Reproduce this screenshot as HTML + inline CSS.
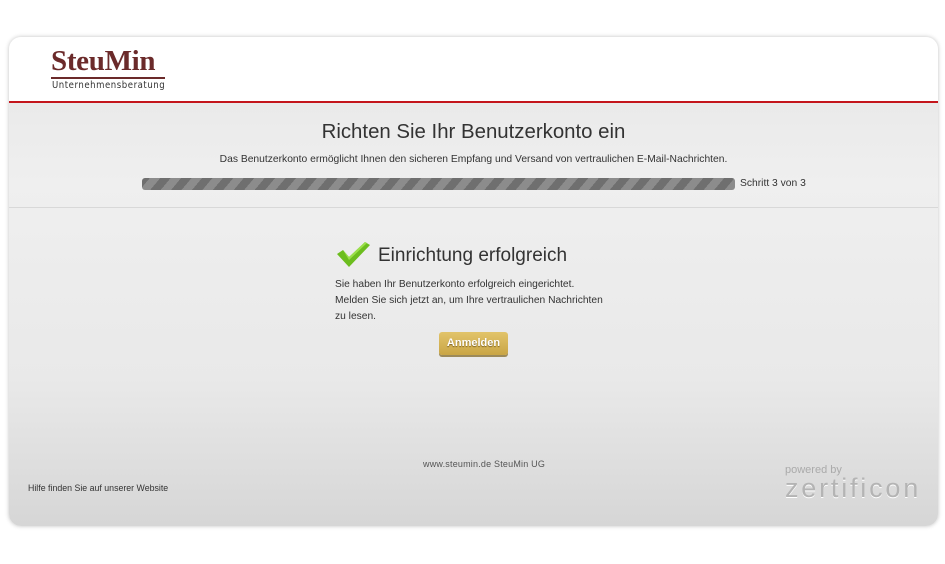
<!DOCTYPE html>
<html><head><style>
body{margin:0;width:945px;height:564px;background:#fff;font-family:"Liberation Sans",sans-serif;position:relative;overflow:hidden}
.card{position:absolute;left:9px;top:37px;width:929px;height:489px;border-radius:12px;overflow:hidden;box-shadow:0 0 4px rgba(0,0,0,.25);background:linear-gradient(#e6e6e6,#efefef 30%,#e9e9e9 70%,#d6d6d6)}
.hdr{position:absolute;left:0;top:0;width:100%;height:64px;background:#fff;border-bottom:2px solid #c4161c}
.logo{position:absolute;left:42px;top:9px;width:115px;font-family:"Liberation Serif",serif;font-weight:bold;font-size:29px;color:#6b2a2a;letter-spacing:-0.3px;line-height:30px}
.logo .bar{position:absolute;left:0;top:31px;width:114px;height:2px;background:#6b2a2a}
.logo .sub{position:absolute;left:1px;top:34px;font-family:"DejaVu Sans Condensed","Liberation Sans",sans-serif;font-weight:normal;font-size:9.5px;letter-spacing:.55px;line-height:11px;color:#333;white-space:nowrap}
.t{position:absolute;width:100%;text-align:center;color:#333}
.prog{position:absolute;left:133px;top:141px;width:593px;height:12px;border-radius:3px;background:repeating-linear-gradient(-50deg,#8c8c8c 0 8px,#6f6f6f 8px 16px)}
.line{position:absolute;left:0;top:170px;width:100%;height:1px;background:#d8d8d8}
.btn{position:absolute;left:430px;top:295px;width:69px;height:23px;border-radius:3px;background:linear-gradient(#e2c46a,#c9a545);box-shadow:0 2px 0 #9c8a5a;color:#fff;font-weight:bold;font-size:11px;text-align:center;line-height:23px;text-shadow:0 1px 1px #7a6020}
</style></head><body>
<div class="card">
<div class="hdr"><div class="logo">SteuMin<div class="bar"></div><div class="sub">Unternehmensberatung</div></div></div>
<div class="t" style="top:84px;font-size:20.4px">Richten Sie Ihr Benutzerkonto ein</div>
<div class="t" style="top:117px;font-size:10.3px">Das Benutzerkonto ermöglicht Ihnen den sicheren Empfang und Versand von vertraulichen E-Mail-Nachrichten.</div>
<div class="prog"></div>
<div style="position:absolute;left:731px;top:141px;font-size:10.3px;color:#333">Schritt 3 von 3</div>
<div class="line"></div>
<svg style="position:absolute;left:326px;top:203px" width="36" height="28" viewBox="0 0 36 28"><path d="M2 14 L8 10 L14 17 L30 2 L35 5 L14 27 Z" fill="#6cbd1e"/><path d="M8 10 L14 17 L30 2 L32 3 L14 20 Z" fill="#9be04a"/></svg>
<div style="position:absolute;left:369px;top:208px;font-size:19px;color:#333">Einrichtung erfolgreich</div>
<div style="position:absolute;left:326px;top:240px;font-size:10.25px;line-height:16px;color:#333">Sie haben Ihr Benutzerkonto erfolgreich eingerichtet.<br>Melden Sie sich jetzt an, um Ihre vertraulichen Nachrichten<br>zu lesen.</div>
<div class="btn">Anmelden</div>
<div style="position:absolute;left:414px;top:422px;font-size:9px;color:#555;letter-spacing:.2px">www.steumin.de SteuMin UG</div>
<div style="position:absolute;left:19px;top:446px;font-size:8.8px;color:#333">Hilfe finden Sie auf unserer Website</div>
<div style="position:absolute;left:776px;top:427px;font-size:11px;color:#aaa">powered by</div>
<div style="position:absolute;left:776px;top:436px;font-size:27px;color:#b4b4b4;letter-spacing:2.8px;text-shadow:0 1px 0 #fff">zertificon</div>
</div>
</body></html>
